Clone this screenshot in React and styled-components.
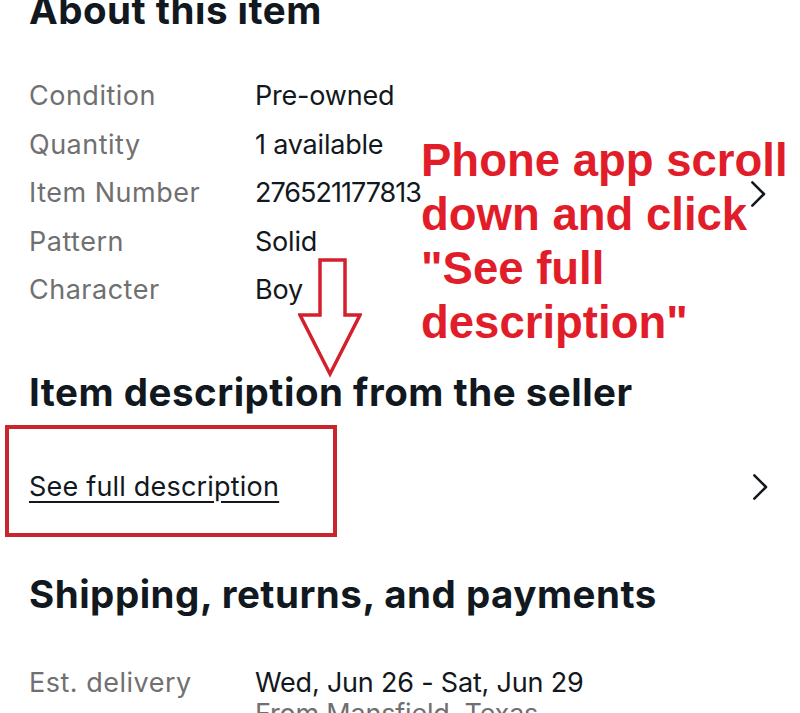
import styled, { createGlobalStyle } from 'styled-components';

const GlobalStyle = createGlobalStyle`
  html, body {
    margin: 0;
    padding: 0;
    background: #fff;
  }
  body {
    font-family: Inter, 'Noto Sans', sans-serif;
    color: #111820;
    overflow: hidden;
  }
`;

const Page = styled.div`
  position: relative;
  width: 800px;
  height: 713px;
  overflow: hidden;
  padding: 0 0 0 29px;
  box-sizing: border-box;
`;

const Section = styled.section`
  display: flex;
  flex-direction: column;
  margin-top: ${(p) => p.$top || 0}px;
`;

const Heading = styled.h2`
  margin: 0;
  font-size: 38.5px;
  font-weight: 700;
  line-height: 44px;
  letter-spacing: 0.5px;
  color: #111820;
`;

const Specs = styled.dl`
  margin: ${(p) => p.$top || 40}px 0 0;
  display: grid;
  grid-template-columns: 226px 1fr;
  align-items: start;
`;

const Label = styled.dt`
  font-size: 27px;
  line-height: 48.5px;
  letter-spacing: 0.5px;
  color: #707070;
`;

const Value = styled.dd`
  margin: 0;
  font-size: 27px;
  line-height: 48.5px;
  letter-spacing: ${(p) => (p.$digits ? '-1px' : '-0.2px')};
  color: #111820;
`;

const SubValue = styled.div`
  font-size: 27px;
  line-height: 32px;
  letter-spacing: -0.2px;
  color: #707070;
  margin-top: -9px;
`;

const LinkRow = styled.div`
  display: flex;
  align-items: center;
  justify-content: space-between;
  height: 60px;
  margin-top: ${(p) => p.$top || 0}px;
  padding-right: 27px;
`;

const TextLink = styled.a`
  font-size: 27px;
  letter-spacing: 0.2px;
  color: #111820;
  text-decoration: underline;
  text-underline-offset: 5px;
  text-decoration-thickness: 2px;
`;

const Chevron = () => (
  <svg width="28" height="28" viewBox="0 0 24 24" fill="none">
    <path d="M8 2 L18 12 L8 22" stroke="#111820" strokeWidth="2.2" strokeLinecap="round" strokeLinejoin="round" />
  </svg>
);

// red markup laid over the page
const Callout = styled.div`
  position: absolute;
  left: 421px;
  top: 134px;
  font-family: 'Liberation Sans', Arial, sans-serif;
  font-weight: 700;
  font-size: 45.5px;
  line-height: 54px;
  color: #e21d2a;
  white-space: pre;
`;

const HighlightBox = styled.div`
  position: absolute;
  left: 5px;
  top: 425px;
  width: 332px;
  height: 112px;
  box-sizing: border-box;
  border: 4px solid #c9252f;
`;

const DownArrow = styled.svg`
  position: absolute;
  left: 298px;
  top: 258px;
`;

const RowChevron = styled.div`
  position: absolute;
  left: 743px;
  top: 180px;
`;

export default function App() {
  return (
    <>
      <GlobalStyle />
      <Page>
        <Section $top={-12}>
          <Heading>About this item</Heading>
          <Specs $top={40}>
            <Label>Condition</Label>
            <Value>Pre-owned</Value>
            <Label>Quantity</Label>
            <Value>1 available</Value>
            <Label>Item Number</Label>
            <Value $digits>276521177813</Value>
            <Label>Pattern</Label>
            <Value>Solid</Value>
            <Label>Character</Label>
            <Value>Boy</Value>
          </Specs>
        </Section>

        <Section $top={55}>
          <Heading>Item description from the seller</Heading>
          <LinkRow $top={43}>
            <TextLink>See full description</TextLink>
            <Chevron />
          </LinkRow>
        </Section>

        <Section $top={55}>
          <Heading>Shipping, returns, and payments</Heading>
          <Specs $top={43}>
            <Label>Est. delivery</Label>
            <div>
              <Value>Wed, Jun 26 - Sat, Jun 29</Value>
              <SubValue>From Mansfield, Texas</SubValue>
            </div>
          </Specs>
        </Section>

        <RowChevron>
          <Chevron />
        </RowChevron>
        <DownArrow width="64" height="120" viewBox="0 0 64 120">
          <path
            d="M22 2 H47 V57 H62 L32 116 L2 57 H22 Z"
            fill="none"
            stroke="#d4202c"
            strokeWidth="3.5"
            strokeLinejoin="miter"
          />
        </DownArrow>
        <HighlightBox />
        <Callout>{'Phone app scroll\ndown and click\n"See full\ndescription"'}</Callout>
      </Page>
    </>
  );
}
